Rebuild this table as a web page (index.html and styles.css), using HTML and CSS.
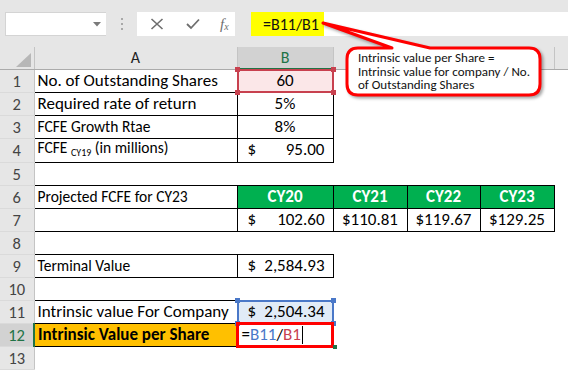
FILE: index.html
```html
<!DOCTYPE html>
<html>
<head>
<meta charset="utf-8">
<link rel="stylesheet" href="styles.css">
</head>
<body>
<div class="app">
  <div class="topbar">
    <div class="namebox"><svg class="dd" width="8" height="5" viewBox="0 0 8 5"><path d="M0 0H8L4 4.5Z" fill="#7a7a7a"/></svg></div>
    <div class="grip"><i></i><i></i><i></i></div>
    <div class="fxbtns">
      <svg class="ic" width="14" height="12" viewBox="0 0 14 12"><path d="M1.5 1 L12.5 11 M12.5 1 L1.5 11" stroke="#6e6e6e" stroke-width="1.6" fill="none"/></svg>
      <svg class="ic" width="14" height="12" viewBox="0 0 14 12"><path d="M1 6 L5 10 L13 1.5" stroke="#6e6e6e" stroke-width="1.8" fill="none"/></svg>
      <span class="fx">f<sub>x</sub></span>
    </div>
    <div class="formula"><span class="fyellow">=B11/B1</span></div>
  </div>

  <table class="sheet">
    <colgroup>
      <col class="c-rh"><col class="c-a"><col class="c-b"><col class="c-c"><col class="c-d"><col class="c-e"><col class="c-f">
    </colgroup>
    <tr class="hdr">
      <th class="corner"><svg width="16" height="14" viewBox="0 0 16 14"><path d="M15 0V14H0Z" fill="#b7b7b7"/></svg></th>
      <th class="colh">A</th>
      <th class="colh selcol">B</th>
      <th class="colh"></th><th class="colh"></th><th class="colh"></th><th class="colh last"></th>
    </tr>
    <tr>
      <th class="rh">1</th>
      <td class="bd">No. of Outstanding Shares</td>
      <td class="bd ctr refred"><div class="selbox red"><i class="h tl"></i><i class="h tr"></i><i class="h bl"></i><i class="h br"></i></div>60</td>
      <td></td><td></td><td></td><td></td>
    </tr>
    <tr>
      <th class="rh">2</th>
      <td class="bd">Required rate of return</td>
      <td class="bd ctr">5%</td>
      <td></td><td></td><td></td><td></td>
    </tr>
    <tr>
      <th class="rh">3</th>
      <td class="bd sm">FCFE Growth Rtae</td>
      <td class="bd ctr">8%</td>
      <td></td><td></td><td></td><td></td>
    </tr>
    <tr>
      <th class="rh">4</th>
      <td class="bd sm">FCFE <sub class="sub">CY19</sub> (in millions)</td>
      <td class="bd"><div class="acc"><span>$</span><span>95.00</span></div></td>
      <td></td><td></td><td></td><td></td>
    </tr>
    <tr>
      <th class="rh">5</th>
      <td></td><td></td><td></td><td></td><td></td><td></td>
    </tr>
    <tr>
      <th class="rh">6</th>
      <td class="bd sm">Projected FCFE for CY23</td>
      <td class="bd green">CY20</td>
      <td class="bd green">CY21</td>
      <td class="bd green">CY22</td>
      <td class="bd green">CY23</td>
      <td></td>
    </tr>
    <tr>
      <th class="rh">7</th>
      <td class="bd"></td>
      <td class="bd"><div class="acc"><span>$</span><span>102.60</span></div></td>
      <td class="bd ctr">$110.81</td>
      <td class="bd ctr">$119.67</td>
      <td class="bd ctr">$129.25</td>
      <td></td>
    </tr>
    <tr>
      <th class="rh">8</th>
      <td></td><td></td><td></td><td></td><td></td><td></td>
    </tr>
    <tr>
      <th class="rh">9</th>
      <td class="bd sm">Terminal Value</td>
      <td class="bd"><div class="acc"><span>$</span><span>2,584.93</span></div></td>
      <td></td><td></td><td></td><td></td>
    </tr>
    <tr>
      <th class="rh">10</th>
      <td></td><td></td><td></td><td></td><td></td><td></td>
    </tr>
    <tr>
      <th class="rh">11</th>
      <td class="bd">Intrinsic value For Company</td>
      <td class="bd refblue"><div class="selbox blue"><i class="h tl"></i><i class="h tr"></i><i class="h bl"></i><i class="h br"></i></div><div class="acc"><span>$</span><span>2,504.34</span></div></td>
      <td></td><td></td><td></td><td></td>
    </tr>
    <tr>
      <th class="rh selrow">12</th>
      <td class="bd gold">Intrinsic Value per Share</td>
      <td class="bd edit"><div class="editbox"></div><span class="fhl">=<span class="t-blue">B11</span>/<span class="t-red">B1</span><span class="caret"></span></span><i class="fill"></i></td>
      <td></td><td></td><td></td><td></td>
    </tr>
    <tr>
      <th class="rh">13</th>
      <td></td><td></td><td></td><td></td><td></td><td></td>
    </tr>
  </table>

  <div class="callout">
    <svg class="callout-shape" width="240" height="90" viewBox="0 0 240 90">
      <path d="M45 38 L79 38 L10 13 L117 38 L216 38 Q227 38 227 49 L227 74 Q227 85 216 85 L45 85 Q34 85 34 74 L34 49 Q34 38 45 38 Z" fill="#fff" stroke="#f00" stroke-width="3" stroke-linejoin="round"/>
    </svg>
    <div class="callout-text">Intrinsic value per Share =<br>Intrinsic value for company / No.<br>of Outstanding Shares</div>
  </div>
</div>
</body>
</html>
```
FILE: styles.css
```css
html, body {
  margin: 0;
  padding: 0;
  background: #fff;
}
body {
  font-family: "Carlito", "Lato", "Liberation Sans", sans-serif;
  color: #000;
}
.app {
  position: relative;
  width: 568px;
  height: 370px;
  overflow: hidden;
}
.topbar {
  display: flex;
  align-items: stretch;
  height: 24px;
  padding: 12px 0 11px 5px;
  background: #e6e6e6;
}
.namebox {
  width: 101px;
  background: #fff;
  border: 1px solid #d4d4d4;
  border-right: none;
  box-sizing: border-box;
  display: flex;
  align-items: center;
  justify-content: flex-end;
  padding-right: 5px;
}
.grip {
  width: 31px;
  display: flex;
  flex-direction: column;
  align-items: center;
  justify-content: center;
  gap: 3px;
}
.grip i {
  display: block;
  width: 2px;
  height: 2px;
  background: #a8a8a8;
}
.fxbtns {
  width: 98px;
  background: #fff;
  display: flex;
  align-items: center;
  padding-left: 13px;
  box-sizing: border-box;
  gap: 22px;
}
.fx {
  font-family: "Liberation Serif", serif;
  font-style: italic;
  font-size: 15px;
  color: #6e6e6e;
  line-height: 1;
  margin-left: -2px;
}
.fx sub {
  font-size: 10px;
  vertical-align: -1px;
}
.formula {
  flex: 1;
  margin-left: 16px;
  background: #fff;
  display: flex;
}
.fyellow {
  width: 73px;
  background: #ffff00;
  display: flex;
  align-items: center;
  padding-left: 12px;
  box-sizing: border-box;
  font-size: 16px;
  color: #111;
}
.sheet {
  table-layout: fixed;
  border-collapse: collapse;
  width: 568px;
  font-size: 17px;
}
.c-rh { width: 34px; }
.c-a { width: 203px; }
.c-b { width: 96px; }
.c-c { width: 74px; }
.c-d { width: 73px; }
.c-e { width: 74px; }
.c-f { width: 14px; }
.sheet tr { height: 23px; }
.sheet tr.hdr { height: 22px; }
.sheet th, .sheet td {
  padding: 0 3px;
  white-space: nowrap;
  overflow: visible;
  vertical-align: middle;
  line-height: 18px;
}
.corner {
  background: #e6e6e6;
  border-right: 1px solid #c4c4c4;
  border-bottom: 1px solid #ababab;
  text-align: right;
  vertical-align: bottom !important;
  padding: 0 2px 2px 0 !important;
}
.corner svg { display: block; margin-left: auto; }
.colh {
  background: #e6e6e6;
  font-weight: normal;
  color: #222;
  border-right: 1px solid #c4c4c4;
  border-bottom: 1px solid #ababab;
  text-align: center;
  font-size: 16px;
}
.colh.last { border-right: none; }
.selcol {
  background: #d2d2d2;
  color: #217346;
  border-bottom: 2px solid #217346;
}
.rh {
  background: #e6e6e6;
  font-weight: normal;
  color: #444;
  text-align: center;
  border-right: 1px solid #c4c4c4;
  border-bottom: 1px solid #dadada;
  font-size: 16.5px;
  padding: 0 !important;
}
.selrow {
  background: #d2d2d2;
  color: #217346;
  border-right: 2px solid #217346;
}
.bd { border: 1px solid #000; }
.ctr { text-align: center; }
.sm { font-size: 15.5px; }
.sub { font-size: 10px; vertical-align: -3px; }
.acc {
  display: flex;
  justify-content: space-between;
  padding: 0 5px 0 7px;
}
.green {
  background: #00b050;
  color: #fff;
  font-weight: bold;
  text-align: center;
}
.gold {
  background: #ffc000;
  font-weight: bold;
}
.refred, .refblue, .edit { position: relative; }
.refred { background: #fbe7e8; }
.refblue { background: #e1ebf7; }
.selbox {
  position: absolute;
  inset: -1px;
  border: 2px solid #c8414f;
  pointer-events: none;
}
.selbox.blue { border-color: #4a78c8; }
.h {
  position: absolute;
  width: 5px;
  height: 5px;
  background: #c8414f;
}
.blue .h { background: #4a78c8; }
.h.tl { left: -4px; top: -4px; }
.h.tr { right: -4px; top: -4px; }
.h.bl { left: -4px; bottom: -4px; }
.h.br { right: -4px; bottom: -4px; }
.editbox {
  position: absolute;
  inset: -2px -1px -2px -2px;
  border: 3px solid #f00;
}
.fhl { position: relative; padding-left: 1px; }
.t-blue { color: #4a78c8; }
.t-red { color: #c8414f; }
.caret {
  display: inline-block;
  width: 1px;
  height: 18px;
  background: #000;
  vertical-align: -4px;
  margin-left: 1px;
}
.fill {
  position: absolute;
  right: -4px;
  bottom: -3px;
  width: 4px;
  height: 4px;
  background: #217346;
}
.callout {
  position: absolute;
  left: 313px;
  top: 10px;
  width: 240px;
  height: 90px;
}
.callout-shape {
  display: block;
  filter: drop-shadow(2px 2px 1.5px rgba(0,0,0,0.35));
}
.callout-text {
  position: absolute;
  left: 45px;
  top: 41px;
  font-size: 13px;
  line-height: 13.5px;
  color: #111;
}
```
